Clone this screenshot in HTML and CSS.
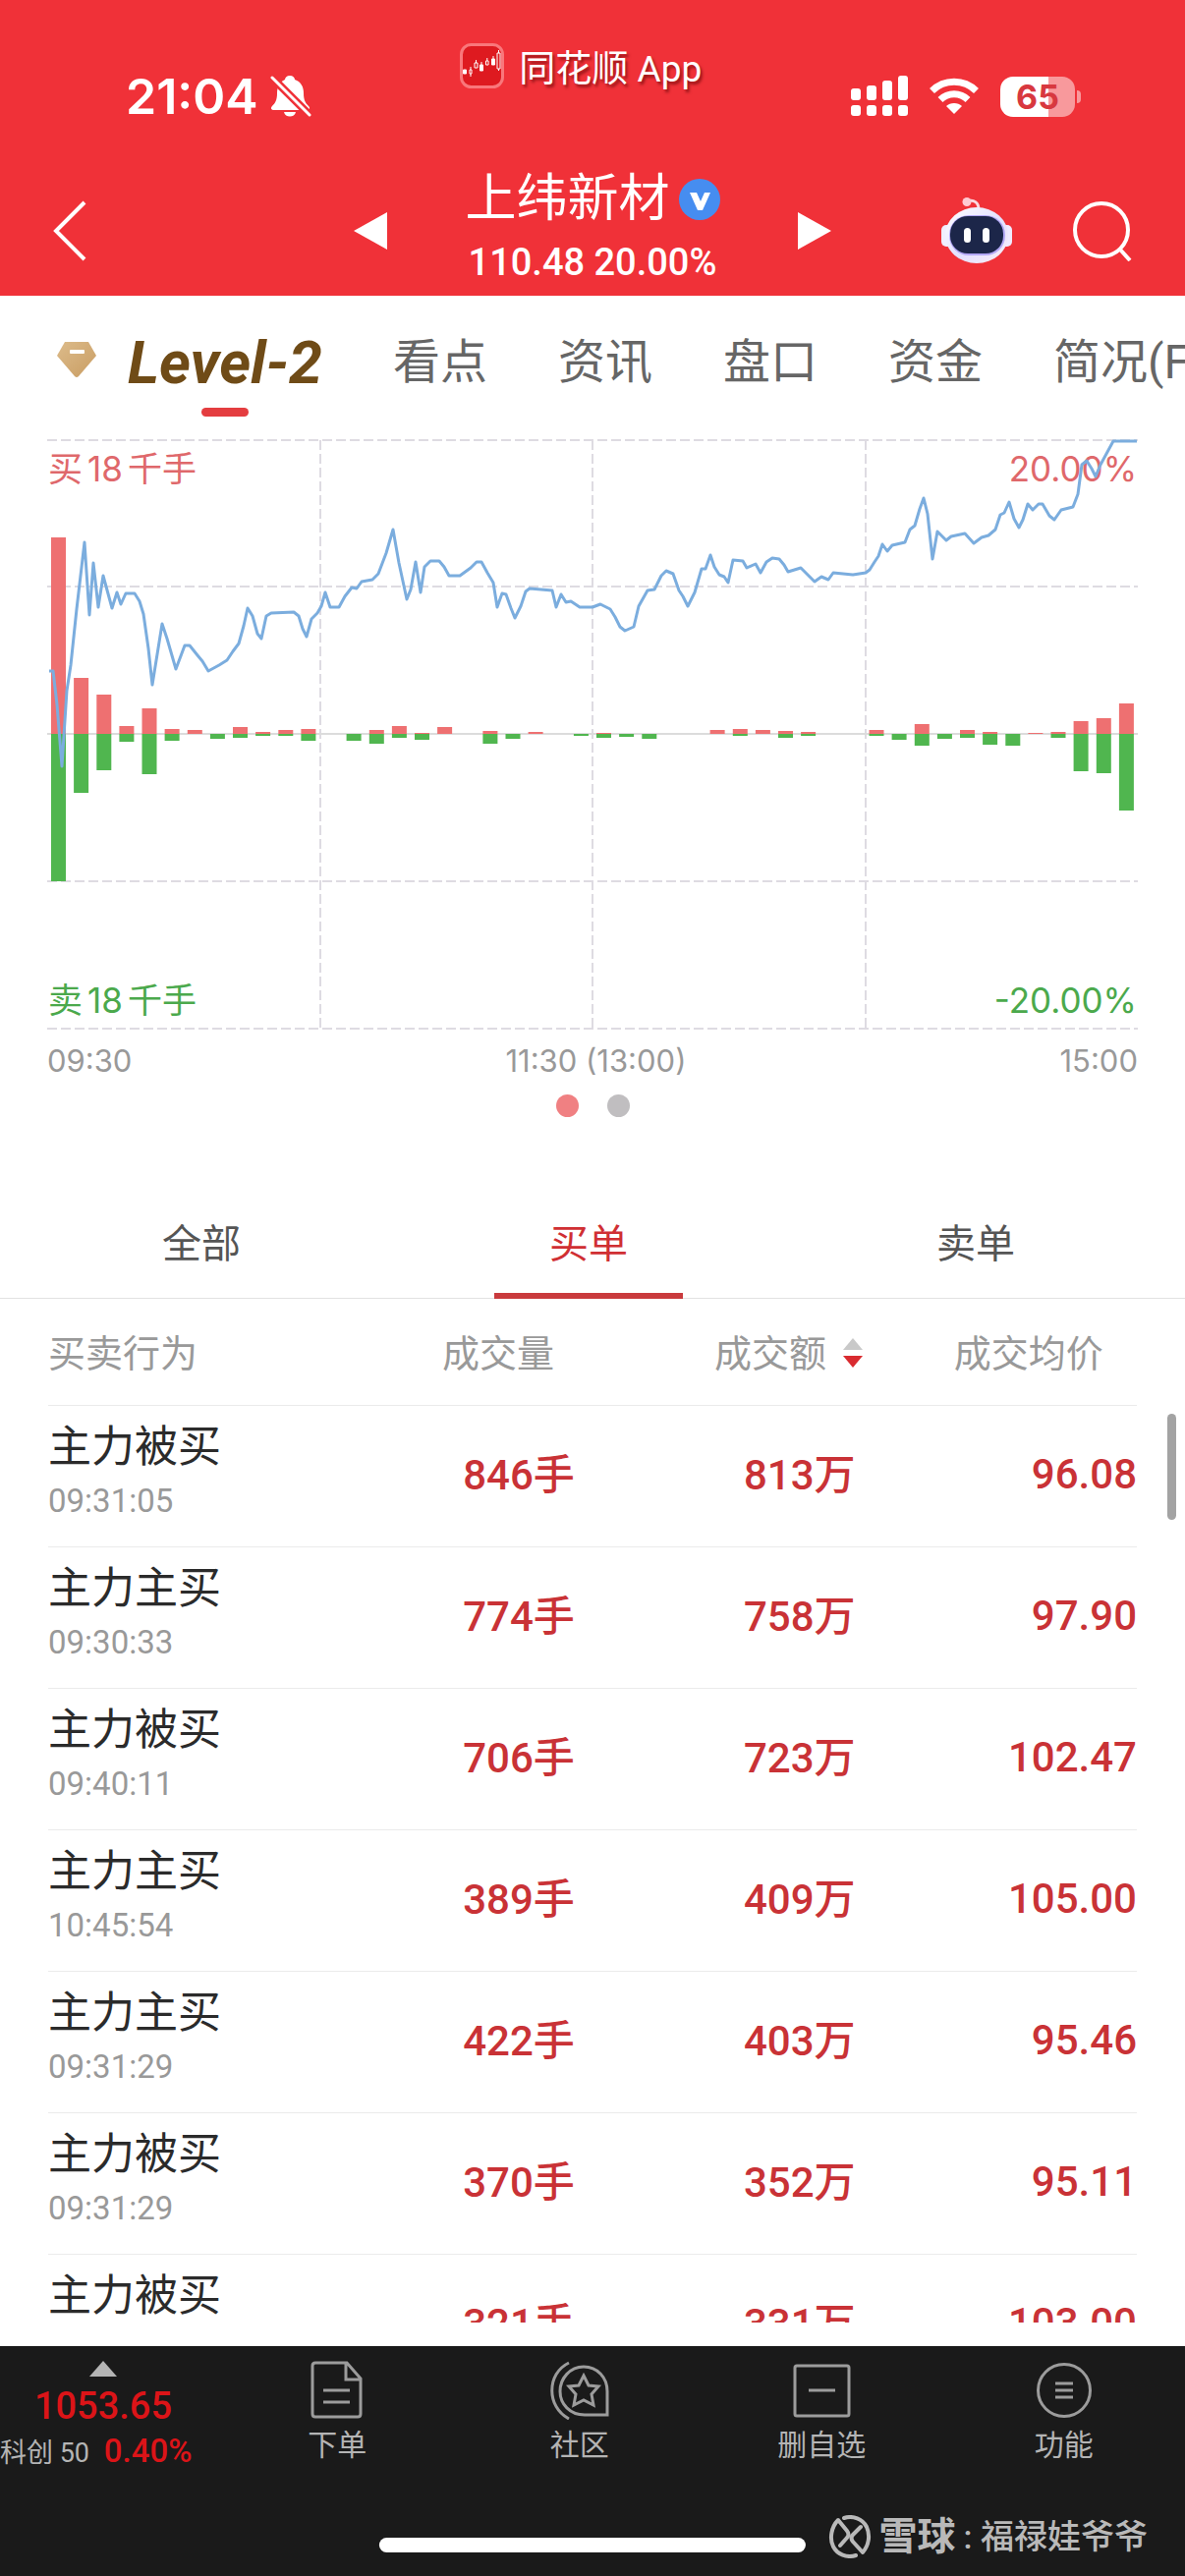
FILE: index.html
```
<!DOCTYPE html>
<html lang="zh-CN">
<head>
    <meta charset="UTF-8">
    <meta name="viewport" content="width=device-width, initial-scale=1">
    <title>上纬新材 Level-2</title>
    <link rel="stylesheet" href="styles.css">
</head>
<body>
    <header class="header">
        <div class="status-bar">
            <div class="status-left">
                <span class="clock">21:04</span>
                <svg width="42" height="44" viewBox="0 0 42 44">
                    <path fill="#fff" d="M20 1c3 0 5 2 5 4 6 2 9 7 9 14 0 7 2 10 5 13 2 2 1 4-2 4H4c-3 0-4-2-2-4 3-3 5-6 5-13 0-7 3-12 8-14 0-2 2-4 5-4zM14 38h12c-1 6-11 6-12 0z"/>
                    <path stroke="#f03138" stroke-width="8" d="M0 1l42 42"/>
                    <path stroke="#fff" stroke-width="3" stroke-linecap="round" d="M2 3l38 38"/>
                </svg>
            </div>
            <div class="app-label">
                <svg width="45" height="46" viewBox="0 0 45 46">
                    <rect x="1.500" y="1.500" width="42" height="43" rx="10" fill="#de1a20" stroke="#f9777b" stroke-width="3"/>
                    <g stroke="#fff" fill="none">
                        <path fill="#fff" d="M3.500 27h3v4h-3zM20.500 22h3v6h-3zM32.500 16h3v6h-3z"/>
                        <path d="M10 27h2v4h-2zM15 20h3v5h-3zM26.500 18h2.500v4h-2.500zM38 10h3v16h-3zM11 24v3M11 31v3M16.500 17v3M22 19v3M27.800 15v3M34 13v3M39.500 7v3M39.500 26v2"/>
                    </g>
                </svg>
                <span>同花顺 App</span>
            </div>
            <div class="status-right">
                <svg width="58" height="42" viewBox="0 0 58 42" fill="#fff">
                    <rect x="0" y="13" width="10" height="12" rx="3"/>
                    <rect x="16" y="10" width="10" height="15" rx="3"/>
                    <rect x="32" y="5" width="10" height="20" rx="3"/>
                    <rect x="48" y="0" width="10" height="25" rx="3"/>
                    <rect x="0" y="30" width="10" height="11" rx="3"/>
                    <rect x="16" y="30" width="10" height="11" rx="3"/>
                    <rect x="32" y="30" width="10" height="11" rx="3"/>
                    <rect x="48" y="30" width="10" height="11" rx="3"/>
                </svg>
                <svg width="50" height="38" viewBox="0 0 50 38" fill="none" stroke="#fff" stroke-width="7">
                    <path d="M2.500 13.500a32 32 0 0 1 45 0"/>
                    <path d="M11 22.500a20 20 0 0 1 28 0"/>
                    <path fill="#fff" stroke="none" d="M25 37l-8-8c4-4 12-4 16 0z"/>
                </svg>
                <div class="battery"><span>65</span></div>
            </div>
        </div>
        <div class="title-bar">
            <button class="icon-btn back" aria-label="返回">
                <svg width="34" height="62" viewBox="0 0 34 62" fill="none" stroke="#fff" stroke-width="4"><path d="M32 2L3 31l29 29"/></svg>
            </button>
            <div class="stock">
                <button class="icon-btn" aria-label="上一只">
                    <svg width="34" height="40" viewBox="0 0 34 40" fill="#fff"><path d="M34 1v38L0 20z"/></svg>
                </button>
                <div class="stock-info">
                    <h1>上纬新材
                        <svg width="42" height="42" viewBox="0 0 42 42"><circle cx="21" cy="21" r="21" fill="#468df0"/><path fill="#fff" d="M11 14h7l4 9 4-9h6l-8 18h-5z"/></svg>
                    </h1>
                    <p>110.48 20.00%</p>
                </div>
                <button class="icon-btn" aria-label="下一只">
                    <svg width="34" height="40" viewBox="0 0 34 40" fill="#fff"><path d="M0 1v38l34-19z"/></svg>
                </button>
            </div>
            <div class="actions">
                <button class="icon-btn" aria-label="智能助手">
                    <svg width="72" height="68" viewBox="0 0 72 68">
                        <defs>
                            <linearGradient id="shell" x1="0" y1="0" x2="1" y2="1">
                                <stop offset="0" stop-color="#ffffff"/>
                                <stop offset=".55" stop-color="#e2e0ff"/>
                                <stop offset="1" stop-color="#fbeef6"/>
                            </linearGradient>
                        </defs>
                        <path d="M27 4c6-2 11 1 11 8" fill="none" stroke="#fbd9e0" stroke-width="3"/>
                        <circle cx="26" cy="4.500" r="4.500" fill="#ffc9d2"/>
                        <rect x="0" y="28" width="12" height="22" rx="5" fill="#f0eeff"/>
                        <rect x="60" y="28" width="12" height="22" rx="5" fill="#f0eaff"/>
                        <ellipse cx="36" cy="38.500" rx="32" ry="28.500" fill="url(#shell)"/>
                        <rect x="8" y="18" width="57" height="41" rx="20" fill="#b3a8f5"/>
                        <rect x="9" y="19" width="54" height="38" rx="18" fill="#1c2649"/>
                        <rect x="23" y="31" width="7" height="15" rx="3.500" fill="#fff"/>
                        <rect x="42" y="31" width="7" height="15" rx="3.500" fill="#fff"/>
                    </svg>
                </button>
                <button class="icon-btn" aria-label="搜索">
                    <svg width="60" height="62" viewBox="0 0 60 62" fill="none" stroke="#fff" stroke-width="4"><circle cx="29" cy="30" r="27"/><path d="M48 50l10 11"/></svg>
                </button>
            </div>
        </div>
    </header>

    <nav class="page-tabs">
        <svg class="gem" width="40" height="38" viewBox="0 0 40 38">
            <defs>
                <linearGradient id="gold" x1="0" y1="0" x2="1" y2="1">
                    <stop offset="0" stop-color="#dcbb8a"/>
                    <stop offset="1" stop-color="#c99d63"/>
                </linearGradient>
            </defs>
            <path fill="url(#gold)" d="M8 1h24l8 14-18 21q-2 2-4 0L0 15z"/>
            <rect x="13" y="9" width="15" height="4" rx="1" fill="#fff"/>
        </svg>
        <a class="active" href="#level2">Level-2</a>
        <a href="#view">看点</a>
        <a href="#news">资讯</a>
        <a href="#quote">盘口</a>
        <a href="#fund">资金</a>
        <a href="#f10">简况(F10)</a>
    </nav>

    <section class="chart">
        <svg viewBox="0 0 1110 602">
            <g stroke="#dedbe2" stroke-width="2" stroke-dasharray="10 4">
                <path d="M0 1h1110M0 150h1110M0 450h1110M0 600h1110"/>
                <path d="M278 1v599M555 1v599M833 1v599"/>
            </g>
            <path d="M0 300h1110" stroke="#dcdcdc" stroke-width="2"/>
            <g id="bars"></g>
            <text class="up" x="1" y="43">买<tspan dx="5">18</tspan><tspan dx="5">千手</tspan></text>
            <text class="up" x="1109" y="43" text-anchor="end">20.00%</text>
            <text class="down" x="1" y="584">卖<tspan dx="5">18</tspan><tspan dx="5">千手</tspan></text>
            <text class="down" x="1109" y="584" text-anchor="end">-20.00%</text>
            <polyline fill="none" stroke="#7badde" stroke-width="3" stroke-linejoin="round" points="
                2,236 6,236 10,270 15,333 20,256 24,230 30,173 38,105 43,179 47,126 52,171 57,139 66,172 71,156 75,168 80,157
                89,157 94,165 98,178 103,213 107,250 117,188 122,203 131,234 140,210 145,210 153,220 158,226 164,236 175,230
                183,225 189,216 195,208 200,190 204,172 209,180 214,198 218,203 223,180 228,177 251,176 256,180 260,193 264,201
                269,183 275,177 279,170 283,156 288,171 297,171 303,160 310,151 315,152 320,145 331,143 337,137 345,116 352,92
                358,126 366,163 370,153 375,125 380,156 384,130 390,124 399,124 404,130 409,139 420,139 431,131 437,125 442,125
                448,136 454,146 458,171 463,157 467,158 472,172 476,182 482,170 487,155 491,152 514,154 518,171 523,158 528,166
                533,165 542,171 555,171 563,168 573,173 578,181 583,191 588,195 597,191 602,170 611,154 618,153 625,139 630,134
                637,137 643,154 647,160 652,170 659,156 666,132 670,132 675,118 679,130 684,138 689,140 693,146 698,123 708,124
                712,131 721,127 726,136 732,125 738,121 745,122 750,128 754,135 767,131 781,145 788,140 795,143 800,136 820,138
                833,136 837,133 842,125 846,119 850,107 855,114 860,108 873,105 878,92 883,88 888,71 892,60 896,76 901,122
                906,94 915,103 920,99 934,96 943,106 951,100 958,98 965,92 970,77 974,75 979,64 984,81 989,90 993,82 998,66
                1003,72 1009,66 1013,66 1020,78 1025,82 1032,72 1044,69 1049,56 1053,26 1058,22 1063,30 1067,38 1072,26 1085,2 1109,2"/>
        </svg>
        <div class="chart-times">
            <span>09:30</span>
            <span>11:30 (13:00)</span>
            <span>15:00</span>
        </div>
        <div class="dots"><i class="on"></i><i></i></div>
    </section>

    <div class="order-tabs">
        <button>全部</button>
        <button class="active">买单</button>
        <button>卖单</button>
    </div>

    <main class="orders">
        <table>
            <thead>
                <tr>
                    <th class="action">买卖行为</th>
                    <th class="volume">成交量</th>
                    <th class="amount">成交额
                        <svg width="20" height="30" viewBox="0 0 20 30"><path fill="#c9c9c9" d="M10 0l10 12H0z"/><path fill="#d92b30" d="M0 18h20L10 30z"/></svg>
                    </th>
                    <th class="price">成交均价</th>
                </tr>
            </thead>
            <tbody>
                <tr><td>主力被买<time>09:31:05</time></td><td>846手</td><td>813万</td><td>96.08</td></tr>
                <tr><td>主力主买<time>09:30:33</time></td><td>774手</td><td>758万</td><td>97.90</td></tr>
                <tr><td>主力被买<time>09:40:11</time></td><td>706手</td><td>723万</td><td>102.47</td></tr>
                <tr><td>主力主买<time>10:45:54</time></td><td>389手</td><td>409万</td><td>105.00</td></tr>
                <tr><td>主力主买<time>09:31:29</time></td><td>422手</td><td>403万</td><td>95.46</td></tr>
                <tr><td>主力被买<time>09:31:29</time></td><td>370手</td><td>352万</td><td>95.11</td></tr>
                <tr><td>主力被买</td><td>321手</td><td>331万</td><td>103.00</td></tr>
            </tbody>
        </table>
        <div class="scroll-thumb"></div>
    </main>

    <footer class="bottom-bar">
        <div class="index">
            <svg width="28" height="16" viewBox="0 0 28 16"><path fill="#b4b4b4" d="M14 0l14 16H0z"/></svg>
            <strong>1053.65</strong>
            <p>科创 50 <b>0.40%</b></p>
        </div>
        <nav class="bottom-nav">
            <a href="#order">
                <svg width="60" height="60" viewBox="0 0 60 60">
                    <path d="M8 2h32l14 16v36q0 3-3 3H8q-3 0-3-3V5q0-3 3-3zM39 3v16h14M16 30h27M16 42h27"/>
                </svg>
                下单
            </a>
            <a href="#community">
                <svg width="60" height="60" viewBox="0 0 60 60">
                    <path d="M19 2C-4 13-4 47 19 59"/>
                    <path d="M58 55H35C20 55 10 44 10 31S20 6 34 6s24 11 24 25z"/>
                    <path d="M34 15l5 10 10 1-7 8 2 11-10-5-10 5 2-11-7-8 10-1z"/>
                </svg>
                社区
            </a>
            <a href="#remove">
                <svg width="60" height="60" viewBox="0 0 60 60"><rect x="3" y="5" width="55" height="51" rx="2"/><path d="M17 30h27"/></svg>
                删自选
            </a>
            <a href="#more">
                <svg width="60" height="60" viewBox="0 0 60 60"><circle cx="30" cy="30" r="26.500"/><path d="M21 23h18M21 30h18M21 37h18"/></svg>
                功能
            </a>
        </nav>
        <div class="home-indicator"></div>
        <div class="watermark">
            <svg width="44" height="44" viewBox="0 0 44 44" fill="none" stroke="#b9b9b9" stroke-width="4" stroke-linecap="round" stroke-linejoin="round">
                <path d="M16 3C25 0 35 4 39 12c4 9 2 19-4 26L25 27q-3-4 0-7l8-8"/>
                <path d="M28 41C19 44 9 40 5 32S3 12 10 5l9 11q3 4 0 7l-7 8"/>
            </svg>
            <b>雪球</b><span>: 福禄娃爷爷</span>
        </div>
    </footer>

    <script>
        // [buy, sell] heights, one pair for every 5 minutes
        const volumes = [
            [200, 150], [57, 60], [40, 37], [8, 8], [26, 41], [5, 7], [4, 0], [0, 5],
            [7, 4], [2, 2], [4, 2], [5, 7], [0, 0], [0, 7], [4, 10], [8, 4],
            [1, 6], [7, 0], [0, 0], [3, 10], [0, 5], [2, 0], [0, 0], [0, 2],
            [1, 4], [0, 3], [0, 5], [0, 0], [0, 0], [4, 0], [5, 2], [4, 0],
            [3, 4], [2, 2], [0, 0], [0, 0], [4, 2], [0, 6], [10, 12], [0, 5],
            [4, 4], [2, 11], [0, 12], [1, 0], [2, 4], [13, 38], [16, 40], [31, 78]
        ];
        const step = 1110 / volumes.length;
        document.getElementById('bars').innerHTML = volumes.map(([buy, sell], i) => {
            const x = (i * step + 4).toFixed(1);
            return `<rect x="${x}" y="${300 - buy}" width="15" height="${buy}" fill="#ee7071"/>` +
                `<rect x="${x}" y="300" width="15" height="${sell}" fill="#50b64f"/>`;
        }).join('');
    </script>
</body>
</html>
```

FILE: styles.css
```
* {
    box-sizing: border-box;
}
body {
    margin: 0;
    height: 100vh;
    display: flex;
    flex-direction: column;
    overflow: hidden;
    background-color: #fff;
    color: #2b2b2b;
    font-family: Roboto, "Noto Sans CJK SC", sans-serif;
}
svg {
    display: block;
    flex: none;
}
h1, p {
    margin: 0;
    font-weight: normal;
}
a {
    color: inherit;
    text-decoration: none;
}
button {
    padding: 0;
    border: none;
    background: none;
    color: inherit;
    font: inherit;
    cursor: pointer;
}

/* header */
.header {
    background-color: #f03138;
    color: #fff;
}
.status-bar {
    display: flex;
    justify-content: space-between;
    height: 168px;
    padding: 44px 106px 0 128px;
}
.status-left, .status-right {
    display: flex;
    align-items: center;
    height: 108px;
}
.status-left {
    gap: 12px;
}
.clock {
    font: 600 50px Inter, sans-serif;
}
.status-right {
    gap: 22px;
}
.app-label {
    display: flex;
    align-items: center;
    gap: 15px;
    height: 46px;
    font-size: 37px;
    text-shadow: 2px 3px 3px rgba(90, 0, 0, 0.6);
}
.battery {
    position: relative;
    width: 76px;
    height: 41px;
    margin-right: 6px;
    border-radius: 13px;
    background: linear-gradient(to right, #fff 65%, #f8999c 65%);
    color: #d8383f;
    font: bold 34px/41px Inter, sans-serif;
    text-align: center;
}
.battery::after {
    content: "";
    position: absolute;
    right: -6px;
    top: 14px;
    width: 4px;
    height: 13px;
    border-radius: 0 4px 4px 0;
    background-color: #f8999c;
}
.title-bar {
    display: grid;
    grid-template-columns: 1fr auto 1fr;
    align-items: center;
    height: 133px;
    padding: 0 54px;
}
.back {
    justify-self: start;
}
.stock {
    display: flex;
    align-items: center;
    gap: 79px;
}
.stock-info {
    text-align: center;
}
.stock-info h1 {
    display: flex;
    align-items: center;
    gap: 9px;
    margin-bottom: 4px;
    font-size: 52px;
    line-height: 60px;
}
.stock-info p {
    font-size: 38px;
    font-weight: 500;
    line-height: 60px;
}
.actions {
    display: flex;
    align-items: center;
    justify-content: flex-end;
    gap: 62px;
}

/* page tabs */
.page-tabs {
    display: flex;
    flex: none;
    gap: 72px;
    height: 146px;
    padding: 38px 0 0 58px;
    overflow: hidden;
    color: #666;
    font-size: 48px;
    line-height: 60px;
    white-space: nowrap;
}
.gem {
    margin: 8px -40px 0 0;
}
.page-tabs .active {
    position: relative;
    color: #6f4b17;
    font-size: 61px;
    font-style: italic;
    font-weight: bold;
}
.page-tabs .active::after {
    content: "";
    position: absolute;
    left: 50%;
    top: 76px;
    width: 48px;
    height: 9px;
    margin-left: -24px;
    border-radius: 5px;
    background-color: #e43d40;
}

/* chart */
.chart {
    padding: 0 48px;
}
.chart > svg {
    width: 100%;
    height: auto;
}
.chart text {
    font-family: Inter, "Noto Sans CJK SC", sans-serif;
    font-size: 35px;
}
.chart .up {
    fill: #df686b;
}
.chart .down {
    fill: #4ba94c;
}
.chart-times {
    display: flex;
    justify-content: space-between;
    margin-top: 11px;
    color: #999;
    font: 31px/40px Inter, sans-serif;
}
.dots {
    display: flex;
    justify-content: center;
    gap: 29px;
    margin-top: 14px;
}
.dots i {
    width: 23px;
    height: 23px;
    border-radius: 50%;
    background-color: #c0bec0;
}
.dots .on {
    background-color: #f08082;
}

/* order tabs */
.order-tabs {
    display: grid;
    grid-template-columns: repeat(3, 1fr);
    flex: none;
    height: 117px;
    margin-top: 68px;
    padding: 0 16px 0 8px;
    border-bottom: 1px solid #e2e2e2;
    color: #555;
    font-size: 40px;
}
.order-tabs .active {
    position: relative;
    color: #d02f33;
}
.order-tabs .active::after {
    content: "";
    position: absolute;
    left: 50%;
    bottom: -1px;
    width: 192px;
    height: 6px;
    margin-left: -96px;
    background-color: #c93a3d;
}

/* orders */
.orders {
    position: relative;
    flex: 1;
    min-height: 0;
    margin-bottom: 24px;
    padding: 0 49px;
    overflow: hidden;
}
.orders table {
    width: 100%;
    border-collapse: collapse;
    table-layout: fixed;
}
.orders th {
    height: 108px;
    padding: 0 0 2px 2px;
    border-bottom: 1px solid #ebebeb;
    color: #999;
    font-size: 38px;
    font-weight: normal;
    text-align: left;
    white-space: nowrap;
}
.orders .action {
    width: 36%;
    padding-left: 0;
}
.orders .volume {
    width: 25%;
}
.orders .amount {
    width: 22%;
}
.orders .price {
    width: 17%;
}
.orders th svg {
    display: inline-block;
    margin-left: 8px;
    vertical-align: -1px;
}
.orders td {
    height: 144px;
    padding: 0 0 4px;
    border-bottom: 1px solid #ebebeb;
    color: #c93236;
    font-size: 42px;
    font-weight: 500;
    text-align: right;
}
.orders td:first-child {
    padding: 12px 0 0;
    color: #2b2b2b;
    font-size: 44px;
    font-weight: normal;
    line-height: 60px;
    text-align: left;
    vertical-align: top;
}
.orders td:nth-child(2) {
    padding: 0 140px 10px 0;
}
.orders td:nth-child(3) {
    padding: 0 98px 10px 0;
}
.orders time {
    display: block;
    color: #999;
    font-size: 33px;
    line-height: 50px;
}
.scroll-thumb {
    position: absolute;
    right: 9px;
    top: 117px;
    width: 9px;
    height: 108px;
    border-radius: 5px;
    background-color: #a3a3a3;
}

/* bottom bar */
.bottom-bar {
    position: relative;
    display: flex;
    flex: none;
    height: 234px;
    background-color: #1a1a1a;
    color: #b4b4b4;
}
.index {
    display: flex;
    flex-direction: column;
    align-items: center;
    width: 220px;
    padding: 15px 10px 0 0;
}
.index strong {
    margin-top: 4px;
    color: #dc1418;
    font-size: 38px;
    font-weight: 500;
    line-height: 52px;
}
.index p {
    align-self: flex-start;
    font-size: 27px;
    line-height: 40px;
    white-space: nowrap;
}
.index b {
    margin-left: 8px;
    color: #dc1418;
    font-size: 33px;
    font-weight: 500;
}
.bottom-nav {
    display: grid;
    grid-template-columns: repeat(4, 1fr);
    flex: 1;
}
.bottom-nav a {
    display: flex;
    flex-direction: column;
    align-items: center;
    gap: 6px;
    padding-top: 15px;
    font-size: 30px;
    line-height: 40px;
}
.bottom-nav svg {
    fill: none;
    stroke: #9c9c9c;
    stroke-width: 3;
}
.home-indicator {
    position: absolute;
    left: 50%;
    bottom: 24px;
    width: 36%;
    height: 15px;
    border-radius: 8px;
    background-color: #fff;
    transform: translateX(-50%);
}
.watermark {
    position: absolute;
    right: 38px;
    bottom: 16px;
    display: flex;
    align-items: center;
    gap: 8px;
    color: #b9b9b9;
    font-size: 34px;
    font-weight: 500;
    line-height: 48px;
}
.watermark b {
    font-size: 39px;
}
```
